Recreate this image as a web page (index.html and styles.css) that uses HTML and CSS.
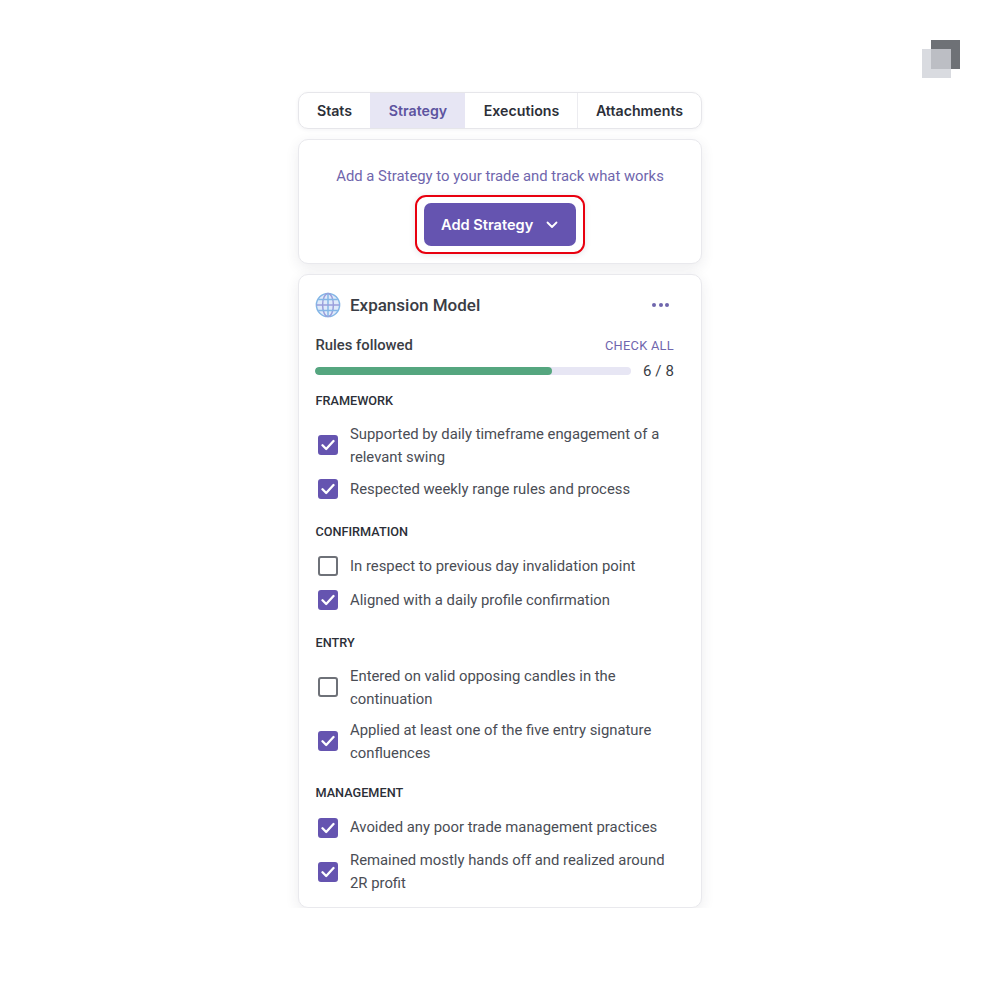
FILE: index.html

```html
<!DOCTYPE html>
<html lang="en">
<head>
    <meta charset="UTF-8">
    <title>Trade Strategy</title>
    <link rel="stylesheet" href="styles.css">
</head>
<body>

<div class="logo">
    <div class="logo-back"></div>
    <div class="logo-front"></div>
</div>

<div class="panel">
    <div class="tabs">
        <div class="tab">Stats</div>
        <div class="tab active">Strategy</div>
        <div class="tab">Executions</div>
        <div class="tab">Attachments</div>
    </div>

    <div class="card add-card">
        <p class="add-text">Add a Strategy to your trade and track what works</p>
        <div class="highlight">
            <button class="add-button">
                Add Strategy
                <svg width="12" height="8" viewBox="0 0 12 8" fill="none" stroke="#fff" stroke-width="1.8" stroke-linecap="round" stroke-linejoin="round"><path d="M1.5 1.5 6 6l4.5-4.5"/></svg>
            </button>
        </div>
    </div>

    <div class="card strategy-card">
        <div class="strategy-head">
            <svg class="globe" width="26" height="26" viewBox="0 0 26 26" fill="none" stroke="#84b6e6" stroke-width="1.5">
                <circle cx="13" cy="13" r="11.6" fill="#dfeafa"/>
                <ellipse cx="13" cy="13" rx="5.4" ry="11.6" stroke="#9a9edb"/>
                <path d="M13 1.4v23.2"/>
                <path d="M1.4 13h23.2" stroke="#9a9edb"/>
                <path d="M3.2 7.5h19.6M3.2 18.5h19.6"/>
            </svg>
            <span class="strategy-name">Expansion Model</span>
            <span class="dots"><i></i><i></i><i></i></span>
        </div>

        <div class="rules-head">
            <span class="rules-label">Rules followed</span>
            <span class="check-all">CHECK ALL</span>
        </div>
        <div class="progress-row">
            <div class="progress"><div class="progress-fill" style="width: 75%"></div></div>
            <span class="progress-count">6 / 8</span>
        </div>

        <div class="group">
            <h4>FRAMEWORK</h4>
            <div class="rule">
                <span class="box checked"><svg width="14" height="12" viewBox="0 0 14 12" fill="none" stroke="#fff" stroke-width="2.3" stroke-linecap="round" stroke-linejoin="round"><path d="M1.5 6.2 5.2 10l7.3-8"/></svg></span>
                <span class="rule-text">Supported by daily timeframe engagement of a relevant swing</span>
            </div>
            <div class="rule">
                <span class="box checked"><svg width="14" height="12" viewBox="0 0 14 12" fill="none" stroke="#fff" stroke-width="2.3" stroke-linecap="round" stroke-linejoin="round"><path d="M1.5 6.2 5.2 10l7.3-8"/></svg></span>
                <span class="rule-text">Respected weekly range rules and process</span>
            </div>
        </div>

        <div class="group">
            <h4>CONFIRMATION</h4>
            <div class="rule">
                <span class="box"></span>
                <span class="rule-text">In respect to previous day invalidation point</span>
            </div>
            <div class="rule">
                <span class="box checked"><svg width="14" height="12" viewBox="0 0 14 12" fill="none" stroke="#fff" stroke-width="2.3" stroke-linecap="round" stroke-linejoin="round"><path d="M1.5 6.2 5.2 10l7.3-8"/></svg></span>
                <span class="rule-text">Aligned with a daily profile confirmation</span>
            </div>
        </div>

        <div class="group">
            <h4>ENTRY</h4>
            <div class="rule">
                <span class="box"></span>
                <span class="rule-text">Entered on valid opposing candles in the continuation</span>
            </div>
            <div class="rule">
                <span class="box checked"><svg width="14" height="12" viewBox="0 0 14 12" fill="none" stroke="#fff" stroke-width="2.3" stroke-linecap="round" stroke-linejoin="round"><path d="M1.5 6.2 5.2 10l7.3-8"/></svg></span>
                <span class="rule-text">Applied at least one of the five entry signature confluences</span>
            </div>
        </div>

        <div class="group group-last">
            <h4>MANAGEMENT</h4>
            <div class="rule">
                <span class="box checked"><svg width="14" height="12" viewBox="0 0 14 12" fill="none" stroke="#fff" stroke-width="2.3" stroke-linecap="round" stroke-linejoin="round"><path d="M1.5 6.2 5.2 10l7.3-8"/></svg></span>
                <span class="rule-text">Avoided any poor trade management practices</span>
            </div>
            <div class="rule">
                <span class="box checked"><svg width="14" height="12" viewBox="0 0 14 12" fill="none" stroke="#fff" stroke-width="2.3" stroke-linecap="round" stroke-linejoin="round"><path d="M1.5 6.2 5.2 10l7.3-8"/></svg></span>
                <span class="rule-text">Remained mostly hands off and realized around 2R profit</span>
            </div>
        </div>
    </div>
</div>

</body>
</html>
```

FILE: styles.css

```css
body {
    font-family: Roboto, Arial, sans-serif;
    margin: 0;
    padding: 92px 0 0;
    background-color: #fff;
    color: #3a3d45;
}
.logo {
    position: absolute;
    top: 40px;
    left: 922px;
    width: 38px;
    height: 38px;
}
.logo-back {
    position: absolute;
    top: 0;
    right: 0;
    width: 29px;
    height: 29px;
    background: #6e7176;
}
.logo-front {
    position: absolute;
    bottom: 0;
    left: 0;
    width: 29px;
    height: 29px;
    background: rgba(208, 210, 216, 0.8);
}
.panel {
    width: 404px;
    margin: 0 auto;
    display: flex;
    flex-direction: column;
    gap: 10px;
}
.tabs {
    display: flex;
    height: 37px;
    border: 1px solid #e6e6ea;
    border-radius: 10px;
    overflow: hidden;
    box-shadow: 0 1px 4px rgba(40, 40, 70, 0.06);
    box-sizing: border-box;
}
.tab {
    font-family: Inter, Arial, sans-serif;
    font-size: 14.2px;
    font-weight: 600;
    color: #2c2f38;
    display: flex;
    align-items: center;
    justify-content: center;
    box-sizing: border-box;
}
.tab:nth-child(1) { width: 71px; }
.tab:nth-child(2) { width: 95px; padding-left: 1px; }
.tab:nth-child(3) { width: 113px; padding-left: 1px; border-right: 1px solid #ececf0; }
.tab:nth-child(4) { flex: 1; }
.tab.active {
    background-color: #e7e6f4;
    color: #5d54a0;
}
.card {
    border: 1px solid #e9e9ed;
    border-radius: 10px;
    box-sizing: border-box;
    box-shadow: 0 4px 14px rgba(40, 40, 70, 0.09);
    background: #fff;
}
.add-card {
    height: 125px;
    padding-top: 27px;
    display: flex;
    flex-direction: column;
    align-items: center;
}
.add-text {
    margin: 0;
    font-size: 14.85px;
    line-height: 18px;
    color: #6f66ad;
}
.highlight {
    margin-top: 10px;
    padding: 6px 7px;
    border: 2px solid #e8000f;
    border-radius: 11px;
    box-shadow: 0 1px 6px rgba(40, 40, 70, 0.12);
    display: flex;
}
.add-button {
    font-family: Inter, Arial, sans-serif;
    font-size: 14.6px;
    font-weight: 600;
    color: #fff;
    background: #6554b0;
    border: none;
    border-radius: 7px;
    width: 152px;
    height: 43px;
    padding: 0 18px 0 17px;
    display: flex;
    align-items: center;
    justify-content: space-between;
}
.strategy-card {
    height: 634px;
    padding: 18px 27px 0 16px;
}
.strategy-head {
    display: flex;
    align-items: center;
    height: 24px;
}
.globe {
    margin-right: 9px;
    flex: none;
}
.strategy-name {
    font-size: 17px;
    font-weight: 500;
    flex: 1;
}
.dots {
    display: flex;
    gap: 2.5px;
    margin-right: 5px;
}
.dots i {
    width: 4px;
    height: 4px;
    border-radius: 50%;
    background: #6f66ad;
}
.rules-head {
    display: flex;
    justify-content: space-between;
    align-items: center;
    margin-top: 18px;
    height: 20px;
}
.rules-label {
    font-size: 14.8px;
    font-weight: 500;
    margin-left: 0.5px;
}
.check-all {
    font-size: 12.8px;
    letter-spacing: 0.3px;
    color: #6f66ad;
}
.progress-row {
    display: flex;
    align-items: center;
    justify-content: space-between;
    margin-top: 6px;
    height: 20px;
}
.progress {
    width: 316px;
    height: 8px;
    background: #e7e6f4;
    border-radius: 4px;
    overflow: hidden;
}
.progress-fill {
    height: 100%;
    background: #55a67f;
    border-radius: 4px;
}
.progress-count {
    font-size: 15px;
    letter-spacing: 0.1px;
}
.group {
    margin-top: 11px;
}
.group + .group {
    margin-top: 17.5px;
}
.group + .group-last {
    margin-top: 16.5px;
}
.group h4 {
    margin: 0 0 7.5px 0.5px;
    font-size: 12.7px;
    line-height: 18px;
    font-weight: 500;
    color: #2c2f38;
}
.group-last h4 {
    margin-bottom: 8.5px;
}
.rule {
    display: flex;
    align-items: center;
    gap: 12px;
    min-height: 34px;
    padding: 4px 0;
    box-sizing: border-box;
    font-size: 14.85px;
    line-height: 23px;
    color: #4a4d55;
}
.rule-text {
    flex: 1;
    padding-top: 1px;
    margin-bottom: -1px;
}
.group-last .rule-text {
    padding-top: 0;
    margin-bottom: 0;
}
.box {
    width: 20px;
    height: 20px;
    margin-left: 3px;
    flex: none;
    box-sizing: border-box;
    border: 2.4px solid #6e7178;
    border-radius: 3px;
    display: flex;
    align-items: center;
    justify-content: center;
}
.box.checked {
    background: #6554b0;
    border-color: #6554b0;
}
```
